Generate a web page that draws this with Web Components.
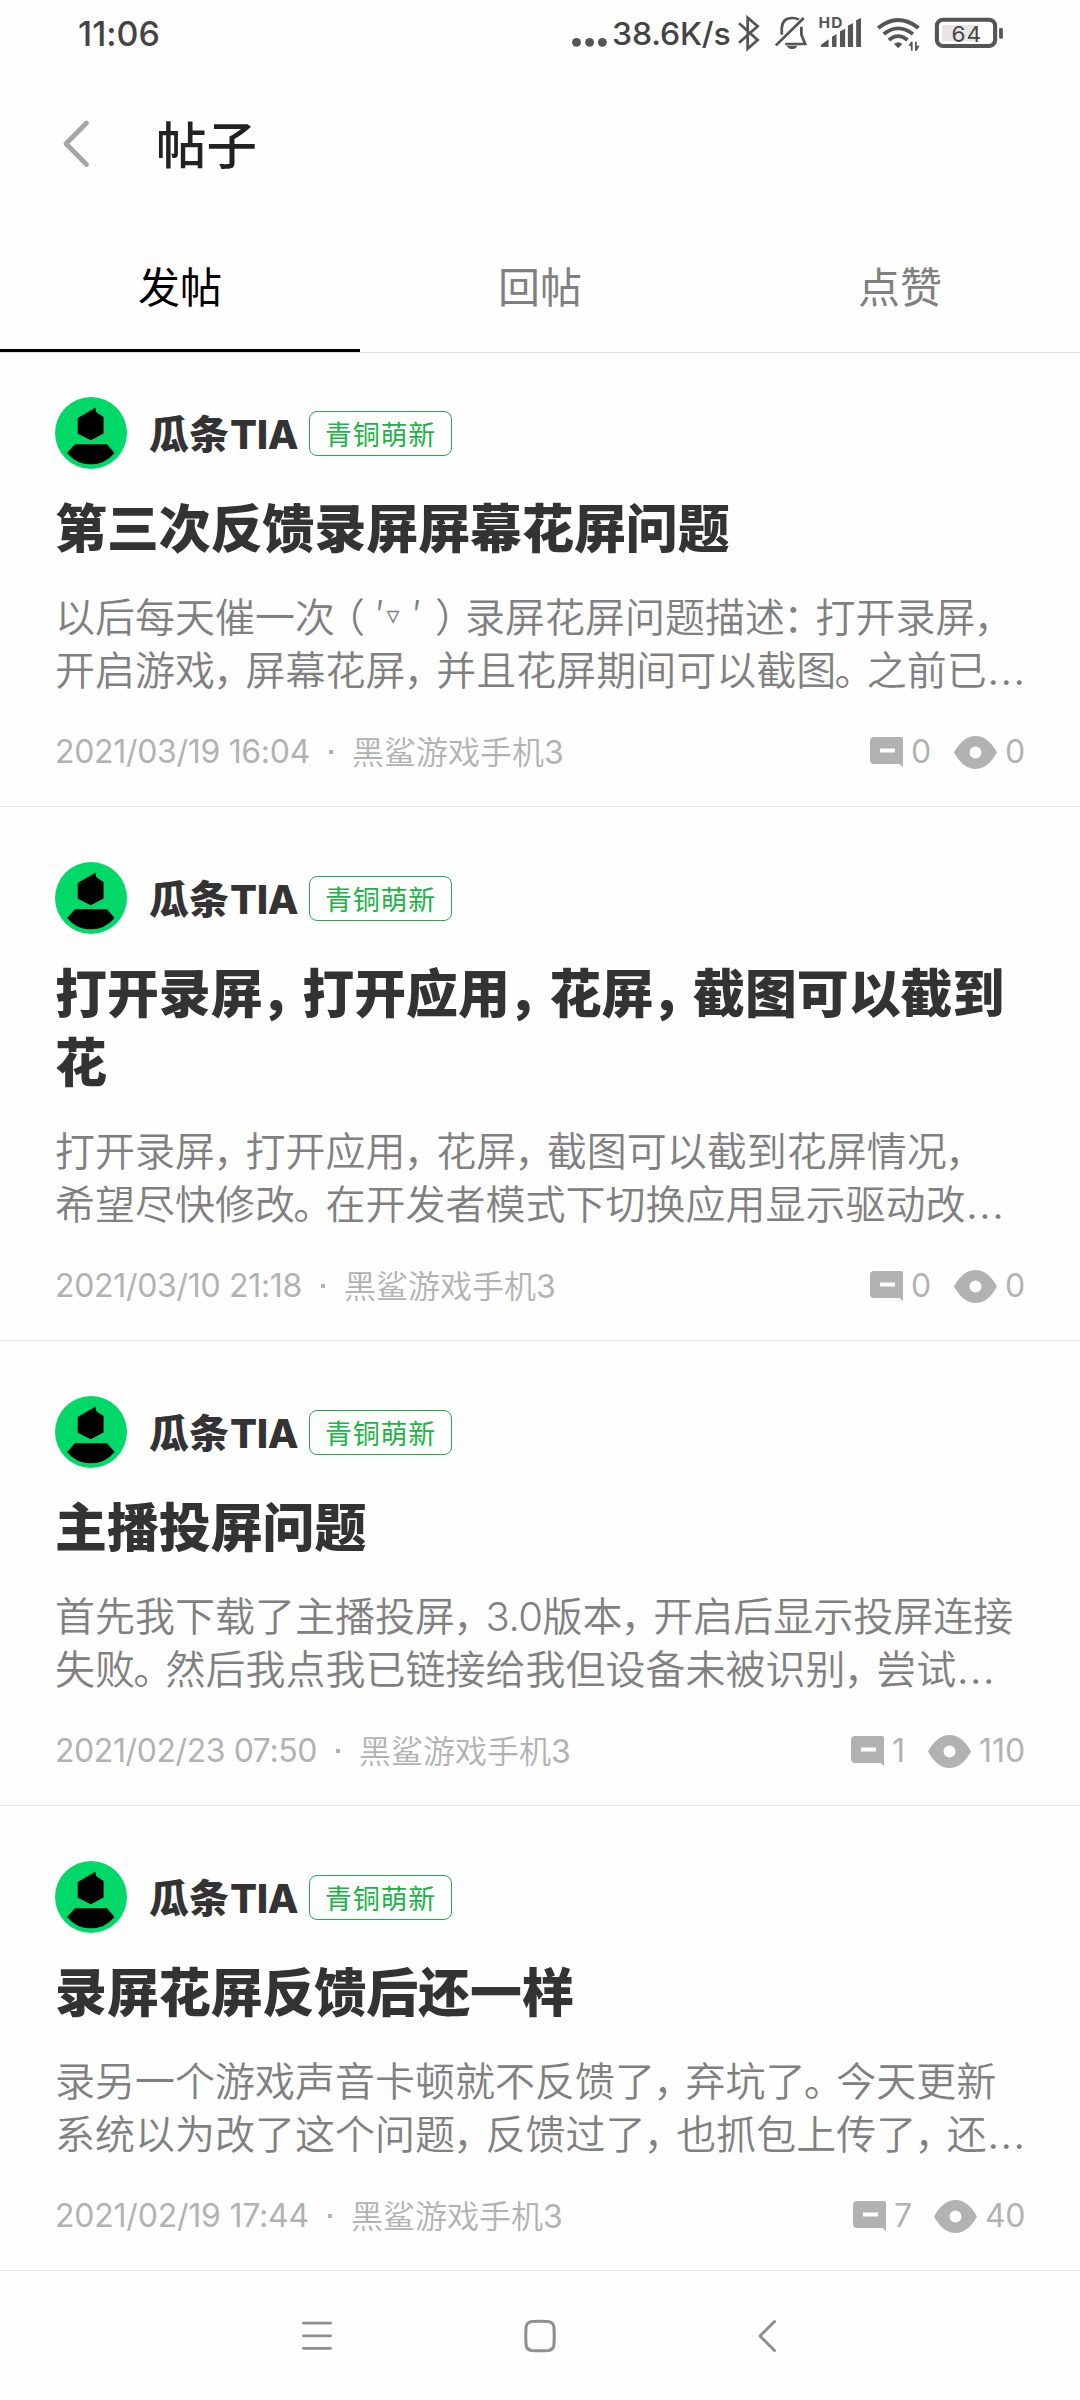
<!DOCTYPE html>
<html lang="zh-CN">
<head>
<meta charset="utf-8">
<title>帖子</title>
<style>
  body { margin: 0; background: #fefefe; font-family: Inter, "Noto Sans CJK SC", sans-serif; }
</style>
</head>
<body>
<forum-page></forum-page>
<script>
const make = (html) => { const t = document.createElement('template'); t.innerHTML = html; return t; };
class Base extends HTMLElement {
  mount(html) {
    if (!this.shadowRoot) this.attachShadow({ mode: 'open' }).append(make(html).content.cloneNode(true));
  }
}

// Spreads its text over a fixed advance width.
class FitText extends Base {
  connectedCallback() {
    this.mount(`<style>:host{display:inline-block;white-space:nowrap}</style><span><slot></slot></span>`);
    const w = +this.getAttribute('width');
    const s = this.shadowRoot.querySelector('span');
    const n = [...this.textContent].length;
    s.style.letterSpacing = ((w - s.getBoundingClientRect().width) / n) + 'px';
    this.style.width = w + 'px';
  }
}

// CJK line whose punctuation is set tighter than a full cell.
class CjkLine extends Base {
  connectedCallback() {
    const html = this.getAttribute('text')
      .replace(/[，。：]/g, '<span class="p">$&</span>')
      .replace('…', '<span class="e">…</span>')
      .replace('3.0', '<fit-text width="57">3.0</fit-text>')
      .replace('（′▿ ′）', '<span class="k"><span class="l">（</span><i>′</i><b>▿</b><i class="r">′</i><span class="m">）</span></span>');
    this.mount(`<style>
      :host{display:block;white-space:pre;font-family:"Noto Sans CJK SC",sans-serif;line-height:inherit;height:var(--line)}
      .p{margin-left:-.045em;letter-spacing:-.19em}
      .e{font-family:Inter;font-weight:300;font-size:1.15em;line-height:1}
      fit-text{font-family:Inter,sans-serif;line-height:1;vertical-align:baseline}
      .k{display:inline-flex;width:130px;height:1em;line-height:1em;vertical-align:baseline;letter-spacing:0}
      .k>*{display:block;flex:none;font-style:normal}
      .l{width:42px;margin-left:-10px;margin-right:7px}
      i{width:12px;font-family:Inter;text-align:center}
      b{width:14px;font-weight:400;font-family:"DejaVu Sans";font-size:26px;text-align:center}
      .r{margin-left:11px}
      .m{margin-left:12px;width:40px}
    </style>${html}`);
  }
}

class StatusBar extends Base {
  connectedCallback() {
    this.mount(`<style>
      :host{display:flex;height:68px;color:#444}
      .time{width:462px;padding-left:78px;font-size:34px;font-weight:550;line-height:67px}
      svg{display:block;width:540px;height:60px}
      text{font-family:Inter,sans-serif}
    </style>
    <div class="time"><fit-text width="82">11:06</fit-text></div>
    <svg viewBox="0 0 1568 180" preserveAspectRatio="none" fill="#555" stroke="none">
      <circle cx="106" cy="127" r="13"/><circle cx="144" cy="127" r="13"/><circle cx="181" cy="127" r="13"/>
      <text x="209" y="135" font-size="93" font-weight="550" fill="#444" textLength="345">38.6K/s</text>
      <path d="M578 70 L632 120 L603 146 V53 L632 79 L578 128" fill="none" stroke="#555" stroke-width="8"/>
      <path d="M685 136 L766 54 M702 104 V84 Q704 54 732 54 Q744 54 752 59 M759 80 V104 L770 132 H712" fill="none" stroke="#555" stroke-width="8"/>
      <path d="M708 137 H748 Q742 147 732 147 Q722 147 716 137Z"/>
      <text x="809" y="83" font-size="45" font-weight="650" textLength="69">HD</text>
      <path d="M816 141 V134 L838 118 V141Z M848 141 V110 L861 102 V141Z M871 141 V94 L886 86 V141Z M894 141 V77 L909 69 V141Z M918 141 V61 L932 54 V141Z"/>
      <g fill="none" stroke="#555" stroke-width="11">
        <path d="M982 84 Q1040 36 1099 84"/><path d="M998 102 Q1040 68 1083 102"/><path d="M1013 120 Q1040 97 1067 120"/>
      </g>
      <path d="M1028 132 Q1040 121 1052 132 L1040 145Z"/>
      <path d="M1070 138 L1077 125 H1082 V152 H1077 V138Z M1089 125 H1094 V137 H1102 L1094 152 H1089Z"/>
      <rect x="1152.500" y="59" width="169" height="79" rx="18" fill="none" stroke="#555" stroke-width="12"/>
      <rect x="1167" y="75" width="98" height="48" rx="4" fill="#e6e6e6"/>
      <rect x="1333" y="84" width="11" height="32" rx="4"/>
      <text x="1195" y="126" font-size="66" font-weight="400" fill="#444" textLength="86">64</text>
    </svg>`);
  }
}

class TitleBar extends Base {
  connectedCallback() {
    this.mount(`<style>
      :host{display:flex;align-items:center;box-sizing:border-box;height:153px;padding:0 0 2px 61px;color:#222;font:450 50.500px/1 "Noto Sans CJK SC",sans-serif}
      svg{width:30px;height:52px;margin-right:65px}
      h1{margin:0 0 3px;font:inherit}
    </style>
    <svg viewBox="0 0 30 52"><path d="M25.500 5 L5 25.700 L25.500 46.500" fill="none" stroke="#a6a6a6" stroke-width="4.800" stroke-linecap="round" stroke-linejoin="round"/></svg>
    <h1><slot></slot></h1>`);
  }
}

class TabBar extends Base {
  connectedCallback() {
    this.mount(`<style>
      :host{display:grid;grid-template-columns:repeat(3,1fr);height:131px;border-bottom:1px solid #e2e2e2;font:400 42px/128px "Noto Sans CJK SC",sans-serif;color:#808080;text-align:center}
      .on{color:#000;border-bottom:3px solid #000;height:128px}
    </style><div class="on">发帖</div><div>回帖</div><div>点赞</div>`);
  }
}

class UserAvatar extends Base {
  connectedCallback() {
    this.mount(`<style>:host{display:block;width:72px;height:72px}svg{display:block}</style>
    <svg width="72" height="72" viewBox="160 111 209 215" preserveAspectRatio="none">
      <ellipse cx="264.500" cy="218.500" rx="104.500" ry="107.500" fill="#00d967"/>
      <path d="M226 174 L272 146 L279 142 Q276 152 282 158 L301 171 V220 L264 240 L226 221Z"/>
      <path d="M218 252 H311 L333 278 Q305 312 264 312 Q222 312 195 278Z"/>
    </svg>`);
  }
}

class PostCard extends Base {
  connectedCallback() {
    const a = (n) => this.getAttribute(n);
    const [cn, cw, cg] = a('comments').split('|');
    const [vn, vw] = a('views').split('|');
    this.mount(`<style>
      :host{display:block;box-sizing:border-box;padding:55px 0 34px 55px;border-bottom:1px solid #e4e4e4}
      header{display:flex;align-items:center;height:72px}
      .name{display:flex;align-items:baseline;height:72px;margin-left:22px;font:900 40px/70px "Noto Sans CJK SC",sans-serif;color:#333}
      .name fit-text{font-family:Inter,sans-serif;font-weight:800;margin-left:1px}
      .badge{box-sizing:border-box;width:143px;height:45px;margin:0 0 0 11px;border:1px solid #22ab4c;border-radius:8px;font:400 27px/43px "Noto Sans CJK SC",sans-serif;color:#1cb347;text-align:center;letter-spacing:.700px}
      .title{--line:69px;margin-top:22px;font-size:51.900px;font-weight:900;line-height:69px;color:#333}
      .body{--line:53px;margin-top:29px;font-size:40px;font-weight:350;line-height:53px;color:#808080}
      footer{display:flex;align-items:center;height:40px;margin-top:37px;padding-right:55px;font-size:32px;line-height:40px;color:#b2b2b2}
      .dot{width:4px;height:4px;background:#b2b2b2;margin:0 19px}
      .dev{height:40px;line-height:37px;font-family:"Noto Sans CJK SC",sans-serif;font-weight:350}
      .num{font-weight:400;font-family:Inter,sans-serif}
      .sp{flex:1}
      .c{width:33px;height:30px;margin-right:8px}
      .v{width:43px;height:33px;margin-right:8px;margin-left:${cg}px}
    </style>
    <header><user-avatar></user-avatar><div class="name">瓜条<fit-text width="68">TIA</fit-text></div><div class="badge">青铜萌新</div></header>
    <div class="title">${a('headline').split('|').map(t => `<cjk-line text="${t}"></cjk-line>`).join('')}</div>
    <div class="body">${a('body').split('|').map(t => `<cjk-line text="${t}"></cjk-line>`).join('')}</div>
    <footer>
      <fit-text class="num date" width="${a('datewidth')}">${a('date')}</fit-text><span class="dot"></span>
      <span class="dev">黑鲨游戏手机<fit-text class="num" width="20">3</fit-text></span><span class="sp"></span>
      <svg class="c" viewBox="0 0 33 30"><path fill="#b2b2b2" fill-rule="evenodd" d="M4 0H31Q33 0 33 2V30L29.500 27H4Q0 27 0 23V4Q0 0 4 0ZM10 11.500V15.500H25V11.500Z"/></svg>
      <fit-text class="num" width="${cw}">${cn}</fit-text>
      <svg class="v" viewBox="0 0 43 33"><path fill="#b2b2b2" fill-rule="evenodd" d="M0 16.500Q9 0 21.500 0Q34 0 43 16.500Q34 33 21.500 33Q9 33 0 16.500ZM21.500 10.500A6 6 0 1 0 21.500 22.500A6 6 0 1 0 21.500 10.500Z"/></svg>
      <fit-text class="num" width="${vw}">${vn}</fit-text>
    </footer>`);
  }
}

class NavBar extends Base {
  connectedCallback() {
    this.mount(`<style>
      :host{display:flex;align-items:center;height:129px;padding-left:302px}
      svg{display:block;height:34px}
    </style>
    <svg width="30" style="margin-right:191px" viewBox="0 0 30 34"><path d="M1.500 4H28.500M1.500 17.500H28.500M1.500 31H28.500" transform="translate(0 .5) scale(1 .93)" stroke="#8f8f8f" stroke-width="3" stroke-linecap="round"/></svg>
    <svg width="34" style="margin-right:200px" viewBox="0 0 34 34"><path d="M9 2.500Q17 2 25 2.500Q30.500 3 31 8.500Q31.500 17 31 25.500Q30.500 31 25 31.500Q17 32 9 31.500Q3.500 31 3 25.500Q2.500 17 3 8.500Q3.500 3 9 2.500Z" fill="none" stroke="#8f8f8f" stroke-width="3"/></svg>
    <svg width="20" viewBox="0 0 20 34"><path d="M17.500 2.500L3 17L17.500 31.500" fill="none" stroke="#8f8f8f" stroke-width="3" stroke-linecap="round" stroke-linejoin="round"/></svg>`);
  }
}

class ForumPage extends Base {
  connectedCallback() {
    this.mount(`<style>
      :host{display:block;width:1080px;height:2400px;overflow:hidden;background:#fefefe}
      post-card:first-of-type{padding-top:44px}
    </style>
    <status-bar></status-bar>
    <title-bar>帖子</title-bar>
    <tab-bar></tab-bar>
    <post-card headline="第三次反馈录屏屏幕花屏问题" body="以后每天催一次（′▿ ′）录屏花屏问题描述：打开录屏，|开启游戏，屏幕花屏，并且花屏期间可以截图。之前已…" date="2021/03/19 16:04" datewidth="255" comments="0|20|23" views="0|20"></post-card>
    <post-card headline="打开录屏，打开应用，花屏，截图可以截到|花" body="打开录屏，打开应用，花屏，截图可以截到花屏情况，|希望尽快修改。在开发者模式下切换应用显示驱动改…" date="2021/03/10 21:18" datewidth="247" comments="0|20|23" views="0|20"></post-card>
    <post-card headline="主播投屏问题" body="首先我下载了主播投屏，3.0版本，开启后显示投屏连接|失败。然后我点我已链接给我但设备未被识别，尝试…" date="2021/02/23 07:50" datewidth="262" comments="1|14|22" views="110|46"></post-card>
    <post-card headline="录屏花屏反馈后还一样" body="录另一个游戏声音卡顿就不反馈了，弃坑了。今天更新|系统以为改了这个问题，反馈过了，也抓包上传了，还…" date="2021/02/19 17:44" datewidth="254" comments="7|18|22" views="40|40"></post-card>
    <nav-bar></nav-bar>`);
  }
}

customElements.define('fit-text', FitText);
customElements.define('cjk-line', CjkLine);
customElements.define('status-bar', StatusBar);
customElements.define('title-bar', TitleBar);
customElements.define('tab-bar', TabBar);
customElements.define('user-avatar', UserAvatar);
customElements.define('post-card', PostCard);
customElements.define('nav-bar', NavBar);
customElements.define('forum-page', ForumPage);
</script>
</body>
</html>
